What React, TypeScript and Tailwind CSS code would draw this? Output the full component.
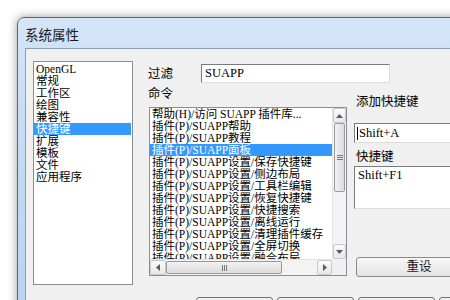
import React from 'react';

const serif = "font-['Liberation_Serif','Noto_Sans_CJK_SC',serif]";

const categories = ['OpenGL', '常规', '工作区', '绘图', '兼容性', '快捷键', '扩展', '模板', '文件', '应用程序'];

const commands = [
  '帮助(H)/访问 SUAPP 插件库...',
  '插件(P)/SUAPP帮助',
  '插件(P)/SUAPP教程',
  '插件(P)/SUAPP面板',
  '插件(P)/SUAPP设置/保存快捷键',
  '插件(P)/SUAPP设置/侧边布局',
  '插件(P)/SUAPP设置/工具栏编辑',
  '插件(P)/SUAPP设置/恢复快捷键',
  '插件(P)/SUAPP设置/快捷搜索',
  '插件(P)/SUAPP设置/离线运行',
  '插件(P)/SUAPP设置/清理插件缓存',
  '插件(P)/SUAPP设置/全屏切换',
  '插件(P)/SUAPP设置/融合布局',
];

const Arrow = ({ dir }: { dir: 'up' | 'down' | 'left' | 'right' }) => {
  const pts = {
    up: '0,4 3.5,0 7,4',
    down: '0,0 3.5,4 7,0',
    left: '4,0 0,3.5 4,7',
    right: '0,0 4,3.5 0,7',
  }[dir];
  const vertical = dir === 'up' || dir === 'down';
  return (
    <svg width={vertical ? 7 : 4} height={vertical ? 4 : 7} viewBox={vertical ? '0 0 7 4' : '0 0 4 7'}>
      <polygon points={pts} fill="#5a5a5a" />
    </svg>
  );
};

const ScrollBtn = ({ dir, className }: { dir: 'up' | 'down' | 'left' | 'right'; className: string }) => (
  <div className={`flex items-center justify-center border border-[#c9c9c9] bg-gradient-to-b from-[#fafafa] to-[#e9e9e9] rounded-[2px] ${className}`}>
    <Arrow dir={dir} />
  </div>
);

const Grip = ({ vertical }: { vertical?: boolean }) => (
  <div className={`flex ${vertical ? 'flex-col' : 'flex-row'} gap-[1px]`}>
    <div className={vertical ? 'w-[6px] h-px bg-[#7a7a7a]' : 'h-[6px] w-px bg-[#7a7a7a]'} />
    <div className={vertical ? 'w-[6px] h-px bg-[#7a7a7a]' : 'h-[6px] w-px bg-[#7a7a7a]'} />
    <div className={vertical ? 'w-[6px] h-px bg-[#7a7a7a]' : 'h-[6px] w-px bg-[#7a7a7a]'} />
  </div>
);

const sunken = 'border border-[#dcdcdc] border-t-[#7b7b7b] border-l-[#7b7b7b] bg-white';

export default function App() {
  return (
    <div className="w-[450px] h-[300px] overflow-hidden bg-white pl-[17px] pt-[17px]">
      <div className="w-[500px] h-[320px] flex flex-col rounded-tl-[7px] border border-[#5d6672] bg-gradient-to-b from-[#d4e5f7] via-[#c0d9f3] to-[#b8d3f0] shadow-[0_0_10px_rgba(0,0,0,0.4)]">
        {/* 标题栏 */}
        <div className="h-[30px] flex items-center pl-[7px] pt-[2px] text-[13.5px] text-[#1a1a1a] font-['Noto_Sans_CJK_SC',sans-serif]">
          系统属性
        </div>

        {/* 客户区 */}
        <div className={`ml-[7px] flex-1 flex flex-col bg-[#f0f0f0] border-t border-l border-[#8d9db1] pt-[12px] pl-[7px] text-[11.5px] text-black ${serif}`}>
          <div className="h-[236px] flex">
            {/* 分类列表 */}
            <div className="w-[100px] h-[224px] border border-[#8a8d92] bg-white pt-px overflow-hidden">
              {categories.map((c) => (
                <div
                  key={c}
                  className={`h-[12px] leading-[12px] pl-[2px] whitespace-nowrap ${c === '快捷键' ? 'bg-[#3399ff] text-white mr-px' : ''}`}
                >
                  {c}
                </div>
              ))}
            </div>

            {/* 中间 + 右侧 */}
            <div className="ml-[15px] flex flex-col">
              <div className="mt-[3px] h-[19px] flex items-center">
                <span className="w-[53px] leading-[12px] text-[12.5px]">过滤</span>
                <div className={`w-[189px] h-[19px] ${sunken} flex items-center pl-[3px] text-[12.5px]`}>SUAPP</div>
              </div>

              <div className="mt-[5px] flex">
                <div className="flex flex-col">
                  <span className="leading-[12px] text-[12.5px]">命令</span>
                  <div className="mt-[7px] ml-px w-[198px] h-[169px] border border-[#8a8d92] bg-white flex flex-col">
                    <div className="h-[151px] flex">
                      <div className="w-[182px] overflow-hidden">
                        {commands.map((c) => (
                          <div
                            key={c}
                            className={`h-[12px] leading-[12px] pl-[2px] whitespace-nowrap ${c.endsWith('面板') ? 'bg-[#3399ff] text-white' : ''}`}
                          >
                            {c}
                          </div>
                        ))}
                      </div>
                      <div className="w-[14px] flex flex-col bg-[#f3f3f3] border-l border-[#e6e6e6]">
                        <ScrollBtn dir="up" className="h-[15px]" />
                        <div className="h-[69px] mx-px flex items-center justify-center border border-[#9a9a9a] rounded-[2px] bg-gradient-to-r from-[#f2f2f2] to-[#dcdcdc]">
                          <Grip vertical />
                        </div>
                        <div className="flex-1" />
                        <ScrollBtn dir="down" className="h-[15px]" />
                      </div>
                    </div>
                    <div className="flex-1 flex">
                      <div className="w-[182px] flex bg-[#f3f3f3] border-t border-[#e6e6e6]">
                        <ScrollBtn dir="left" className="w-[16px]" />
                        <div className="w-[116px] my-px flex items-center justify-center border border-[#9a9a9a] rounded-[2px] bg-gradient-to-b from-[#f2f2f2] to-[#dcdcdc]">
                          <Grip />
                        </div>
                        <div className="flex-1" />
                        <ScrollBtn dir="right" className="w-[15px]" />
                      </div>
                      <div className="flex-1 bg-[#f0f0f0]" />
                    </div>
                  </div>
                </div>

                {/* 快捷键 */}
                <div className="ml-[7px] w-[130px] flex flex-col text-[12.5px]">
                  <span className="mt-[8px] leading-[12px] pl-[2px]">添加快捷键</span>
                  <div className={`mt-[15px] h-[20px] ${sunken} flex items-center pl-[2px]`}>
                    <div className="w-px h-[13px] bg-black" />
                    <span className="pl-px">Shift+A</span>
                  </div>
                  <span className="mt-[8px] leading-[12px] pl-[2px]">快捷键</span>
                  <div className={`mt-[3px] h-[43px] ${sunken} pl-[3px] pt-[2px] leading-[12px]`}>Shift+F1</div>
                  <button className="mt-[48px] ml-[2px] h-[20px] w-[126px] border border-[#8a8a8a] rounded-[3px] bg-gradient-to-b from-[#f7f7f7] to-[#e3e3e3] leading-[12px] text-[#222]">
                    重设
                  </button>
                </div>
              </div>
            </div>
          </div>

          {/* 底部按钮（只露出顶边） */}
          <div className="flex gap-[4px] pl-[163px]">
            <div className="w-[80px] h-[23px] border border-[#707070] rounded-[3px] bg-gradient-to-b from-[#f2f2f2] to-[#dddddd]" />
            <div className="w-[80px] h-[23px] border border-[#707070] rounded-[3px] bg-gradient-to-b from-[#f2f2f2] to-[#dddddd]" />
            <div className="w-[80px] h-[23px] border border-[#707070] rounded-[3px] bg-gradient-to-b from-[#f2f2f2] to-[#dddddd]" />
            <div className="w-[80px] h-[23px] border border-[#707070] rounded-[3px] bg-gradient-to-b from-[#f2f2f2] to-[#dddddd]" />
          </div>
        </div>
      </div>
    </div>
  );
}
